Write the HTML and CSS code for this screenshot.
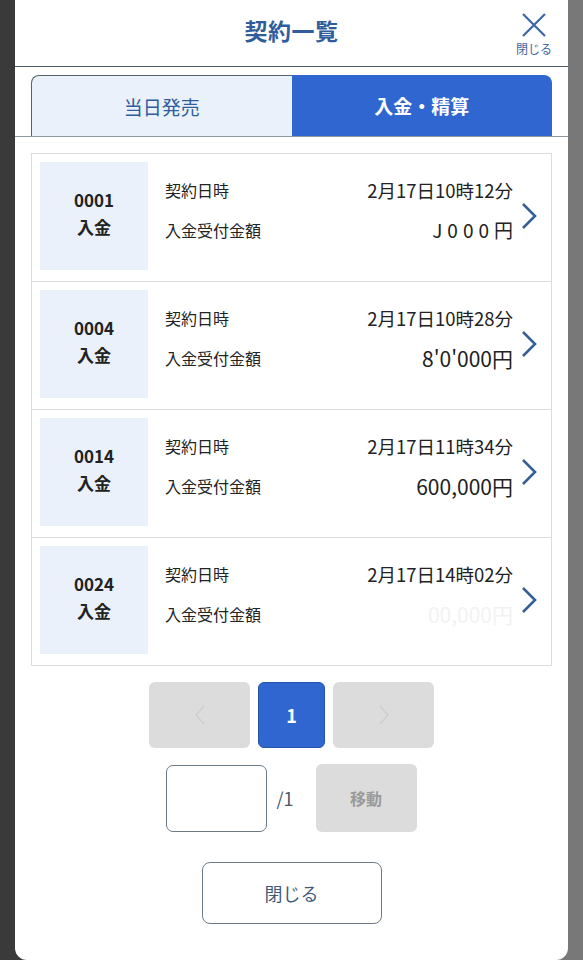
FILE: index.html
```html
<!DOCTYPE html>
<html lang="ja">
<head>
  <meta charset="UTF-8">
  <title>契約一覧</title>
  <link rel="stylesheet" href="styles.css">
</head>
<body>

  <div class="modal">
    <div class="modal-header">
      <span></span>
      <h1 class="modal-title">契約一覧</h1>
      <button type="button" class="close-x">
        <svg width="26" height="26" viewBox="0 0 26 26"><path d="M2 2 L24 24 M24 2 L2 24" stroke="#3b67a6" stroke-width="2.2" fill="none"/></svg>
        <span>閉じる</span>
      </button>
    </div>

    <div class="tabs-wrap">
      <div class="tabs">
        <div class="tab">当日発売</div>
        <div class="tab active">入金・精算</div>
      </div>
    </div>

    <div class="list" id="list"></div>

    <div class="pager">
      <button type="button" class="pg-btn disabled">
        <svg width="12" height="22" viewBox="0 0 12 22"><path d="M10 2 L2 11 L10 20" stroke="#cfcfcf" stroke-width="1.6" fill="none"/></svg>
      </button>
      <button type="button" class="pg-num">1</button>
      <button type="button" class="pg-btn disabled">
        <svg width="12" height="22" viewBox="0 0 12 22"><path d="M2 2 L10 11 L2 20" stroke="#cfcfcf" stroke-width="1.6" fill="none"/></svg>
      </button>
    </div>

    <div class="jump">
      <input type="text" class="jump-input">
      <span class="jump-total">/1</span>
      <button type="button" class="jump-btn">移動</button>
    </div>

    <div class="footer">
      <button type="button" class="close-btn">閉じる</button>
    </div>
  </div>

  <script>
    const contracts = [
      { no: "0001", date: "2月17日10時12分", amount: "J000円", cls: "wide" },
      { no: "0004", date: "2月17日10時28分", amount: "8'0'000円", cls: "" },
      { no: "0014", date: "2月17日11時34分", amount: "600,000円", cls: "" },
      { no: "0024", date: "2月17日14時02分", amount: "00,000円", cls: "faint" }
    ];

    const chevron = '<svg width="18" height="30" viewBox="0 0 18 30"><path d="M3 3 L15 15 L3 27" stroke="#345f9c" stroke-width="2.6" fill="none"/></svg>';

    const list = document.getElementById('list');
    contracts.forEach(c => {
      const row = document.createElement('div');
      row.className = 'row';
      row.innerHTML =
        `<div class="badge"><span>${c.no}</span><span>入金</span></div>
         <div class="info">
           <div class="line"><span class="label">契約日時</span><span class="value">${c.date}</span></div>
           <div class="line"><span class="label">入金受付金額</span><span class="value amount ${c.cls}">${c.amount}</span></div>
         </div>
         <div class="chev">${chevron}</div>`;
      list.appendChild(row);
    });
  </script>

</body>
</html>
```

FILE: styles.css
```css
body {
  margin: 0;
  font-family: "Noto Sans CJK JP", "Noto Sans", sans-serif;
  background: linear-gradient(to right, #3a3a3a 50%, #787878 50%);
  color: #222;
}

.modal {
  margin: 0 15px;
  height: 960px;
  background-color: #fff;
  border-radius: 0 0 12px 12px;
  overflow: hidden;
}

.modal-header {
  display: grid;
  grid-template-columns: 1fr auto 1fr;
  align-items: center;
  height: 67px;
  border-bottom: 1px solid #4f5d68;
  box-sizing: border-box;
}

.modal-title {
  margin: 0;
  font-size: 23px;
  font-weight: bold;
  color: #2f5d9c;
  letter-spacing: 0.5px;
  padding-bottom: 6px;
}

.close-x {
  justify-self: end;
  margin-right: 16px;
  background: none;
  border: none;
  padding: 0;
  display: flex;
  flex-direction: column;
  align-items: center;
  font-family: inherit;
  font-size: 12px;
  color: #3b67a6;
  line-height: 1;
}

.close-x span {
  margin-top: 5px;
}

.tabs-wrap {
  padding: 8px 16px 0;
  border-bottom: 1px solid #8c98a2;
}

.tabs {
  display: grid;
  grid-template-columns: 1fr 1fr;
  height: 61px;
}

.tab {
  display: flex;
  align-items: center;
  justify-content: center;
  font-size: 19px;
  color: #2f5d9c;
  background-color: #eaf1fb;
  border: 1px solid #56646e;
  border-bottom: none;
  border-right: none;
  border-radius: 8px 0 0 0;
}

.tab.active {
  background-color: #2f66d0;
  color: #fff;
  font-weight: bold;
  border: none;
  border-radius: 0 8px 0 0;
}

.list {
  margin: 16px 16px 0;
  border: 1px solid #dcdcdc;
}

.row {
  display: flex;
  align-items: stretch;
  padding: 8px 0 11px 8px;
  border-bottom: 1px solid #dcdcdc;
}

.row:last-child {
  border-bottom: none;
}

.badge {
  width: 108px;
  height: 108px;
  padding-bottom: 6px;
  box-sizing: border-box;
  flex-shrink: 0;
  background-color: #eaf1fb;
  display: flex;
  flex-direction: column;
  align-items: center;
  justify-content: center;
  font-size: 17px;
  font-weight: bold;
  line-height: 27px;
  color: #222;
}

.info {
  flex: 1;
  padding: 14px 0 0 17px;
  display: flex;
  flex-direction: column;
  gap: 13px;
}

.line {
  display: flex;
  justify-content: space-between;
  align-items: center;
  height: 27px;
}

.label {
  font-size: 16px;
  color: #222;
}

.value {
  font-size: 18.5px;
  color: #222;
}

.amount {
  font-size: 21px;
}

.amount.wide {
  font-size: 19px;
  letter-spacing: 5px;
  margin-right: -5px;
}

.amount.faint {
  color: #f2f2f2;
}

.chev {
  width: 38px;
  display: flex;
  align-items: center;
  padding-left: 7px;
  box-sizing: border-box;
}

.pager {
  display: flex;
  justify-content: center;
  gap: 8px;
  margin-top: 16px;
}

.pg-btn {
  width: 101px;
  height: 66px;
  background-color: #dcdcdc;
  border: none;
  border-radius: 6px;
  display: flex;
  align-items: center;
  justify-content: center;
}

.pg-num {
  width: 67px;
  height: 66px;
  background-color: #2f66d0;
  border: 1px solid #2553a8;
  border-radius: 6px;
  color: #fff;
  font-family: inherit;
  font-size: 18px;
  font-weight: bold;
}

.jump {
  display: flex;
  justify-content: center;
  align-items: center;
  margin-top: 16px;
}

.jump-input {
  width: 101px;
  height: 67px;
  box-sizing: border-box;
  border: 1px solid #6c7a86;
  border-radius: 7px;
}

.jump-total {
  font-size: 18px;
  color: #4a5866;
  margin: 0 22px 0 9px;
}

.jump-btn {
  width: 101px;
  height: 68px;
  background-color: #dcdcdc;
  border: none;
  border-radius: 6px;
  font-family: inherit;
  font-size: 16px;
  font-weight: bold;
  color: #9a9a9a;
}

.footer {
  display: flex;
  justify-content: center;
  margin-top: 30px;
}

.close-btn {
  width: 180px;
  height: 62px;
  background-color: #fff;
  border: 1px solid #6c7a86;
  border-radius: 8px;
  font-family: inherit;
  font-size: 18px;
  color: #3f5b78;
}
```
